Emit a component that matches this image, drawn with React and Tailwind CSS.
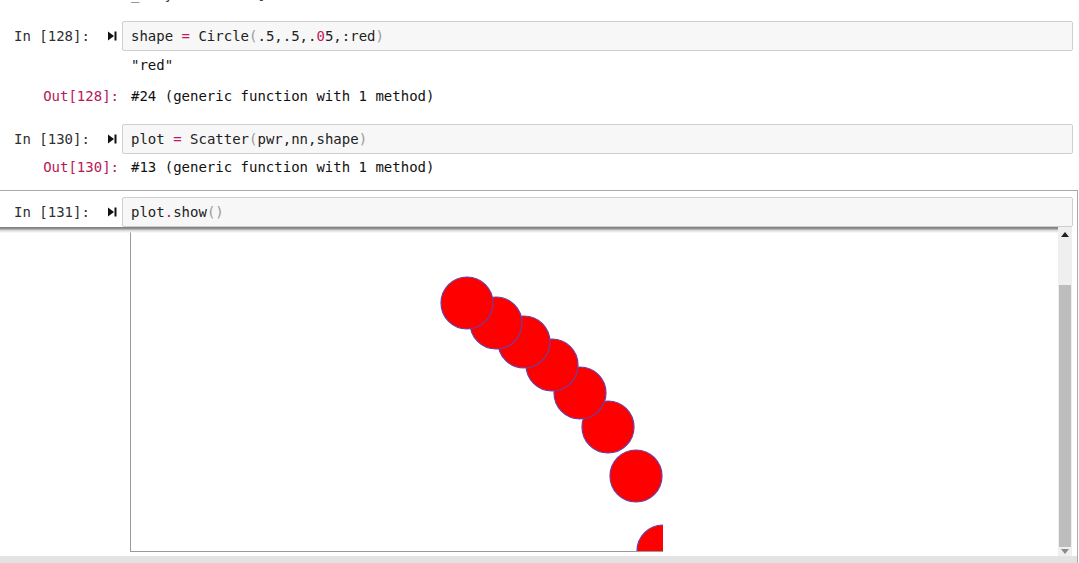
import React from 'react';

const circles = [
  [336, 76],
  [365, 96],
  [393, 115],
  [421, 138],
  [449, 166],
  [477, 200],
  [505, 249],
  [532, 324],
];

const RunIcon = () => (
  <svg width="9" height="10" viewBox="0 0 9 10" className="shrink-0">
    <path d="M0 0.5 L6 5 L0 9.5 Z" fill="#111" />
    <rect x="6.5" y="0.5" width="2" height="9" fill="#111" />
  </svg>
);

const InputRow = ({ n, children, className = '' }) => (
  <div className={`flex h-[30px] ${className}`}>
    <div className="w-[122px] shrink-0 flex items-center">
      <span className="w-[108px] pl-[14px] text-[#303030]">In [{n}]:</span>
      <RunIcon />
    </div>
    <div className="flex-1 h-full border border-[#cfcfcf] bg-[#f7f7f7] rounded-[2px] pl-[8px] flex items-center text-[#222] whitespace-pre">
      {children}
    </div>
  </div>
);

const OutRow = ({ n, children, className = '' }) => (
  <div className={`flex h-[17px] ${className}`}>
    <div className="w-[122px] shrink-0 text-right pr-[3px] text-[#b8185a]">
      {n ? `Out[${n}]:` : ''}
    </div>
    <div className="pl-[9px] text-[#111] whitespace-pre">{children}</div>
  </div>
);

const Op = ({ children }) => <span className="text-[#c2185b]">{children}</span>;
const Par = ({ children }) => <span className="text-[#9a9a9a]">{children}</span>;

const Scrollbar = () => (
  <div className="w-[14px] shrink-0 flex flex-col bg-[#efefef]">
    <div className="h-[14px] flex items-center justify-center">
      <div className="w-0 h-0 border-l-[4px] border-r-[4px] border-b-[5px] border-l-transparent border-r-transparent border-b-[#222]" />
    </div>
    <div className="h-[44px]" />
    <div className="h-[262px] mx-[1px] bg-[#bdbdbd]" />
    <div className="flex-1 flex items-center justify-center">
      <div className="w-0 h-0 border-l-[4px] border-r-[4px] border-t-[5px] border-l-transparent border-r-transparent border-t-[#8a8a8a]" />
    </div>
  </div>
);

export default function App() {
  return (
    <div className="w-[1079px] h-[563px] overflow-hidden bg-white flex flex-col font-['DejaVu_Sans_Mono','Liberation_Mono',monospace] text-[14px] leading-[17px]">
      {/* tail of the previous output, scrolled off the top */}
      <div className="h-[4px] overflow-hidden shrink-0">
        <div className="-mt-[14px] pl-[131px] whitespace-pre text-[#444]">_   y          ]</div>
      </div>

      <div className="pr-[6px]">
        <InputRow n="128" className="mt-[17px]">
          shape <Op>=</Op> Circle<Par>(</Par>.5,.5,.<Op>0</Op>5,:red<Par>)</Par>
        </InputRow>
        <OutRow className="mt-[6px]">"red"</OutRow>
        <OutRow n="128" className="mt-[14px]">#24 (generic function with 1 method)</OutRow>

        <InputRow n="130" className="mt-[19px]">
          plot <Op>=</Op> Scatter<Par>(</Par>pwr,nn,shape<Par>)</Par>
        </InputRow>
        <OutRow n="130" className="mt-[5px]">#13 (generic function with 1 method)</OutRow>
      </div>

      {/* selected cell */}
      <div className="mt-[14px] mr-[1px] flex-1 flex flex-col border-t border-r border-[#ababab]">
        <div className="pr-[4px] mt-[6px]">
          <InputRow n="131">
            plot<Op>.</Op>show<Par>()</Par>
          </InputRow>
        </div>

        <div className="relative h-[329px] flex pr-[5px]">
          <div className="flex-1 flex">
            <div className="w-[130px] shrink-0" />
            <div className="w-[533px] h-[325px] border-l border-b border-[#9a9a9a] overflow-hidden">
              <svg width="532" height="324" viewBox="0 0 532 324">
                {[...circles].reverse().map(([cx, cy], i) => (
                  <circle key={i} cx={cx} cy={cy} r="26" fill="#ff0000" stroke="#6d3fa3" strokeWidth="1.2" />
                ))}
              </svg>
            </div>
          </div>
          <Scrollbar />
          <div className="absolute top-0 left-0 right-[19px] h-[6px] bg-[linear-gradient(to_bottom,#7d7d7d_0px,#959595_2px,#d3d3d3_3px,#f0f0f0_5px,transparent_6px)]" />
        </div>

        <div className="flex-1 bg-[#e3e3e3]" />
      </div>
    </div>
  );
}
